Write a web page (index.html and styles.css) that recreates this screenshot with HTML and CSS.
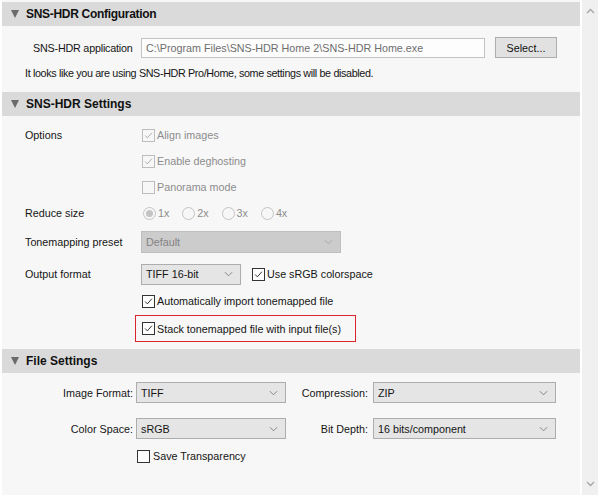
FILE: index.html
```html
<!DOCTYPE html>
<html>
<head>
<meta charset="utf-8">
<link rel="stylesheet" href="styles.css">
</head>
<body>
<div class="window">
  <div class="main">
    <section class="sec">
      <div class="sec-head"><span class="tri"></span><span class="sec-title narrow">SNS-HDR Configuration</span></div>
      <div class="sec-body cfg">
        <div class="app-row">
          <span class="app-lbl">SNS-HDR application</span>
          <div class="textbox">C:\Program Files\SNS-HDR Home 2\SNS-HDR Home.exe</div>
          <div class="btn">Select...</div>
        </div>
        <div class="note">It looks like you are using SNS-HDR Pro/Home, some settings will be disabled.</div>
      </div>
    </section>

    <section class="sec">
      <div class="sec-head"><span class="tri"></span><span class="sec-title">SNS-HDR Settings</span></div>
      <div class="sec-body hdr">
        <div class="row r26">
          <span class="lbl">Options</span>
          <div class="ctl"><span class="cb dis checked"><svg viewBox="0 0 13 13"><polyline points="2.5,6.5 5.2,9.3 10.5,3.2"/></svg></span><span class="dtext">Align images</span></div>
        </div>
        <div class="row r26">
          <span class="lbl"></span>
          <div class="ctl"><span class="cb dis checked"><svg viewBox="0 0 13 13"><polyline points="2.5,6.5 5.2,9.3 10.5,3.2"/></svg></span><span class="dtext">Enable deghosting</span></div>
        </div>
        <div class="row r26">
          <span class="lbl"></span>
          <div class="ctl"><span class="cb dis"></span><span class="dtext">Panorama mode</span></div>
        </div>
        <div class="row r26">
          <span class="lbl">Reduce size</span>
          <div class="ctl radios">
            <span class="ri"><span class="rb on"></span><span class="dtext">1x</span></span>
            <span class="ri"><span class="rb"></span><span class="dtext">2x</span></span>
            <span class="ri"><span class="rb"></span><span class="dtext">3x</span></span>
            <span class="ri"><span class="rb"></span><span class="dtext">4x</span></span>
          </div>
        </div>
        <div class="row r32">
          <span class="lbl">Tonemapping preset</span>
          <div class="ctl"><div class="sel dis w200"><span>Default</span><svg viewBox="0 0 10 6"><polyline points="1,1 5,5 9,1"/></svg></div></div>
        </div>
        <div class="row r32">
          <span class="lbl">Output format</span>
          <div class="ctl">
            <div class="sel w100"><span>TIFF 16-bit</span><svg viewBox="0 0 10 6"><polyline points="1,1 5,5 9,1"/></svg></div>
            <span class="cb checked srgb"><svg viewBox="0 0 13 13"><polyline points="2.5,6.5 5.2,9.3 10.5,3.2"/></svg></span><span class="ctext">Use sRGB colorspace</span>
          </div>
        </div>
        <div class="row r22">
          <span class="lbl"></span>
          <div class="ctl"><span class="cb checked"><svg viewBox="0 0 13 13"><polyline points="2.5,6.5 5.2,9.3 10.5,3.2"/></svg></span><span class="ctext">Automatically import tonemapped file</span></div>
        </div>
        <div class="row r27">
          <span class="lbl"></span>
          <div class="ctl"><div class="redbox"><span class="cb checked"><svg viewBox="0 0 13 13"><polyline points="2.5,6.5 5.2,9.3 10.5,3.2"/></svg></span><span class="ctext">Stack tonemapped file with input file(s)</span></div></div>
        </div>
      </div>
    </section>

    <section class="sec">
      <div class="sec-head"><span class="tri"></span><span class="sec-title">File Settings</span></div>
      <div class="sec-body files">
        <div class="frow">
          <span class="flbl">Image Format:</span>
          <div class="sel w150"><span>TIFF</span><svg viewBox="0 0 10 6"><polyline points="1,1 5,5 9,1"/></svg></div>
          <span class="flbl2">Compression:</span>
          <div class="sel w183"><span>ZIP</span><svg viewBox="0 0 10 6"><polyline points="1,1 5,5 9,1"/></svg></div>
        </div>
        <div class="frow">
          <span class="flbl">Color Space:</span>
          <div class="sel w150"><span>sRGB</span><svg viewBox="0 0 10 6"><polyline points="1,1 5,5 9,1"/></svg></div>
          <span class="flbl2">Bit Depth:</span>
          <div class="sel w183"><span>16 bits/component</span><svg viewBox="0 0 10 6"><polyline points="1,1 5,5 9,1"/></svg></div>
        </div>
        <div class="trow">
          <span class="cb"></span><span class="ctext">Save Transparency</span>
        </div>
      </div>
    </section>
  </div>
  <div class="scrollbar">
    <svg class="arr" viewBox="0 0 9 6"><polyline points="1,5 4.5,1.5 8,5"/></svg>
    <svg class="arr" viewBox="0 0 9 6"><polyline points="1,1 4.5,4.5 8,1"/></svg>
  </div>
</div>
</body>
</html>
```
FILE: styles.css
```css
* { box-sizing: border-box; }
html, body { margin: 0; padding: 0; }
body {
  width: 598px;
  height: 495px;
  overflow: hidden;
  background: #ffffff;
  font-family: "Liberation Sans", Arial, sans-serif;
  font-size: 10.75px;
  color: #151515;
}
.window {
  display: flex;
  height: 495px;
}
.main {
  width: 578px;
  margin-left: 2px;
  padding-top: 2px;
  background: #f7f7f7;
  height: 495px;
}
.scrollbar {
  width: 16px;
  margin-left: 2px;
  background: #f0f0f0;
  display: flex;
  flex-direction: column;
  justify-content: space-between;
  align-items: center;
  padding: 8px 0 8px 0;
}
.arr { width: 9px; height: 6px; fill: none; stroke: #a6a6a6; stroke-width: 1.3; }

.sec-head {
  height: 24px;
  background: #dadada;
  display: flex;
  align-items: center;
  padding-left: 9px;
}
.tri {
  width: 0; height: 0;
  border-left: 4.5px solid transparent;
  border-right: 4.5px solid transparent;
  border-top: 8px solid #6a6a6a;
  margin-right: 7px;
}
.sec-title { font-weight: bold; font-size: 12px; color: #111; }
.sec-title.narrow { letter-spacing: -0.3px; }

.cfg { padding: 11px 0 12px 0; }
.app-row { display: flex; align-items: center; height: 21px; padding-left: 31px; }
.app-lbl { width: 108px; letter-spacing: -0.2px; }
.textbox {
  width: 344px; height: 20px;
  background: #fdfdfd;
  border: 1px solid #c3c3c3;
  color: #6e6e6e;
  padding-left: 4px;
  display: flex; align-items: center;
}
.btn {
  margin-left: 10px;
  width: 62px; height: 21px;
  background: #e1e1e1;
  border: 1px solid #adadad;
  display: flex; align-items: center; justify-content: center;
  color: #111;
}
.note { margin-top: 8px; height: 14px; line-height: 14px; padding-left: 23px; letter-spacing: -0.35px; }

.hdr { padding: 6px 0 7px 0; }
.row { display: flex; align-items: center; padding-left: 23px; }
.r26 { height: 26px; }
.r32 { height: 32px; }
.r22 { height: 22px; }
.r27 { height: 27px; margin-top: 3px; }
.lbl { width: 116px; }
.ctl { display: flex; align-items: center; }

.cb {
  width: 13px; height: 13px;
  border: 1px solid #333;
  background: #fff;
  margin-left: 1px;
  margin-right: 2px;
  display: inline-flex;
  flex: none;
}
.cb svg { width: 11px; height: 11px; fill: none; stroke: #222; stroke-width: 1.1; }
.cb.dis { border-color: #bdbdbd; background: #f7f7f7; }
.cb.dis svg { stroke: #a8a8a8; }
.dtext { color: #8c8c8c; }
.ctext { color: #151515; }

.radios { display: flex; }
.ri { display: flex; align-items: center; width: 39.3px; }
.rb {
  width: 13px; height: 13px; border-radius: 50%;
  border: 1px solid #c4c4c4; background: #f7f7f7;
  margin-left: 2px; margin-right: 2px;
  display: inline-flex; align-items: center; justify-content: center;
}
.rb.on::after {
  content: ""; width: 7px; height: 7px; border-radius: 50%; background: #c4c4c4;
}

.sel {
  height: 21px;
  background: #e5e5e5;
  border: 1px solid #adadad;
  display: flex; align-items: center; justify-content: space-between;
  padding: 0 7px 0 4px;
  color: #151515;
}
.sel svg { width: 9px; height: 6px; fill: none; stroke: #7a7a7a; stroke-width: 1; }
.sel.dis { background: #cccccc; border-color: #bfbfbf; color: #838383; }
.sel.dis svg { stroke: #a4a4a4; }
.w200 { width: 200px; height: 22px; }
.w100 { width: 100px; }
.w150 { width: 150px; }
.w183 { width: 183px; }
.srgb { margin-left: 11px; }

.redbox {
  margin-left: -6px;
  width: 221px; height: 27px;
  border: 1px solid #d9262e;
  display: flex; align-items: center;
  padding-left: 5px;
}

.files { padding: 9px 0 0 0; }
.frow { display: flex; align-items: center; height: 21px; margin-bottom: 15px; }
.flbl { width: 134px; text-align: right; padding-right: 3px; }
.flbl2 { width: 87px; text-align: right; padding-right: 5px; }
.trow { display: flex; align-items: center; height: 14px; padding-left: 134px; margin-top: -5px; }
.trow .cb { margin-right: 3px; }
```
